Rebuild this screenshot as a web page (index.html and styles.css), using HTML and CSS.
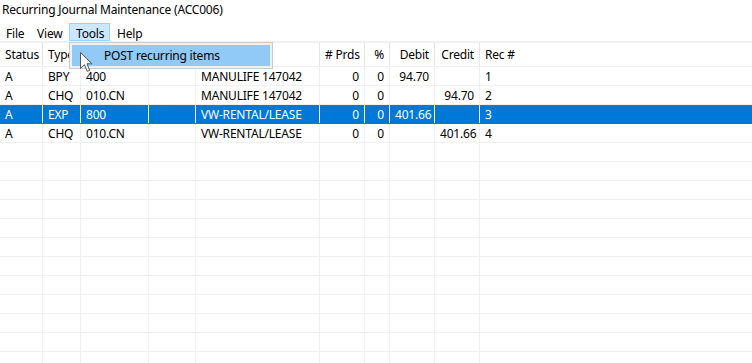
FILE: index.html
```html
<!DOCTYPE html>
<html>
<head>
<meta charset="utf-8">
<link rel="stylesheet" href="styles.css">
</head>
<body>
<div class="window">
  <div class="titlebar">Recurring Journal Maintenance (ACC006)</div>
  <div class="menubar">
    <span class="menu m-file">File</span>
    <span class="menu m-view">View</span>
    <span class="menu m-tools active">Tools</span>
    <span class="menu m-help">Help</span>
  </div>
  <div class="grid">
    <div class="row head">
      <div class="c">Status</div><div class="c">Type</div><div class="c"></div><div class="c"></div><div class="c"></div>
      <div class="c r">#&nbsp;Prds</div><div class="c r">%</div><div class="c r">Debit</div><div class="c r">Credit</div><div class="c last">Rec #</div>
    </div>
    <div class="row">
      <div class="c">A</div><div class="c">BPY</div><div class="c">400</div><div class="c"></div><div class="c">MANULIFE 147042</div>
      <div class="c r">0</div><div class="c r">0</div><div class="c r">94.70</div><div class="c r"></div><div class="c last">1</div>
    </div>
    <div class="row">
      <div class="c">A</div><div class="c">CHQ</div><div class="c">010.CN</div><div class="c"></div><div class="c">MANULIFE 147042</div>
      <div class="c r">0</div><div class="c r">0</div><div class="c r"></div><div class="c r">94.70</div><div class="c last">2</div>
    </div>
    <div class="row sel">
      <div class="c">A</div><div class="c">EXP</div><div class="c">800</div><div class="c"></div><div class="c">VW-RENTAL/LEASE</div>
      <div class="c r">0</div><div class="c r">0</div><div class="c r">401.66</div><div class="c r"></div><div class="c last">3</div>
    </div>
    <div class="row">
      <div class="c">A</div><div class="c">CHQ</div><div class="c">010.CN</div><div class="c"></div><div class="c">VW-RENTAL/LEASE</div>
      <div class="c r">0</div><div class="c r">0</div><div class="c r"></div><div class="c r">401.66</div><div class="c last">4</div>
    </div>
    <div class="row"><div class="c"></div><div class="c"></div><div class="c"></div><div class="c"></div><div class="c"></div><div class="c"></div><div class="c"></div><div class="c"></div><div class="c"></div><div class="c last"></div></div>
    <div class="row"><div class="c"></div><div class="c"></div><div class="c"></div><div class="c"></div><div class="c"></div><div class="c"></div><div class="c"></div><div class="c"></div><div class="c"></div><div class="c last"></div></div>
    <div class="row"><div class="c"></div><div class="c"></div><div class="c"></div><div class="c"></div><div class="c"></div><div class="c"></div><div class="c"></div><div class="c"></div><div class="c"></div><div class="c last"></div></div>
    <div class="row"><div class="c"></div><div class="c"></div><div class="c"></div><div class="c"></div><div class="c"></div><div class="c"></div><div class="c"></div><div class="c"></div><div class="c"></div><div class="c last"></div></div>
    <div class="row"><div class="c"></div><div class="c"></div><div class="c"></div><div class="c"></div><div class="c"></div><div class="c"></div><div class="c"></div><div class="c"></div><div class="c"></div><div class="c last"></div></div>
    <div class="row"><div class="c"></div><div class="c"></div><div class="c"></div><div class="c"></div><div class="c"></div><div class="c"></div><div class="c"></div><div class="c"></div><div class="c"></div><div class="c last"></div></div>
    <div class="row"><div class="c"></div><div class="c"></div><div class="c"></div><div class="c"></div><div class="c"></div><div class="c"></div><div class="c"></div><div class="c"></div><div class="c"></div><div class="c last"></div></div>
    <div class="row"><div class="c"></div><div class="c"></div><div class="c"></div><div class="c"></div><div class="c"></div><div class="c"></div><div class="c"></div><div class="c"></div><div class="c"></div><div class="c last"></div></div>
    <div class="row"><div class="c"></div><div class="c"></div><div class="c"></div><div class="c"></div><div class="c"></div><div class="c"></div><div class="c"></div><div class="c"></div><div class="c"></div><div class="c last"></div></div>
    <div class="row"><div class="c"></div><div class="c"></div><div class="c"></div><div class="c"></div><div class="c"></div><div class="c"></div><div class="c"></div><div class="c"></div><div class="c"></div><div class="c last"></div></div>
    <div class="row"><div class="c"></div><div class="c"></div><div class="c"></div><div class="c"></div><div class="c"></div><div class="c"></div><div class="c"></div><div class="c"></div><div class="c"></div><div class="c last"></div></div>
    <div class="row"><div class="c"></div><div class="c"></div><div class="c"></div><div class="c"></div><div class="c"></div><div class="c"></div><div class="c"></div><div class="c"></div><div class="c"></div><div class="c last"></div></div>
  </div>
  <div class="dropdown">
    <div class="item">POST recurring items</div>
  </div>
  <svg class="cursor" width="13" height="21" viewBox="0 0 13 21">
    <path d="M0.5,0.5 L0.5,16.5 L4.5,12.7 L7.2,19.3 L9.6,18.3 L7,11.8 L12,11.8 Z" fill="#ffffff" stroke="#555555" stroke-width="1" stroke-linejoin="miter"/>
  </svg>
</div>
</body>
</html>
```
FILE: styles.css
```css
* { box-sizing: border-box; }
html, body {
  margin: 0;
  padding: 0;
  background: #ffffff;
}
body {
  font-family: "Noto Sans", "Open Sans", sans-serif;
  font-size: 12px;
  letter-spacing: -0.2px;
  color: #000000;
  width: 752px;
  height: 363px;
  overflow: hidden;
}
.window {
  position: relative;
  width: 752px;
  height: 363px;
  overflow: hidden;
}
.titlebar {
  height: 19px;
  line-height: 19px;
  padding-left: 2px;
}
.menubar {
  height: 24px;
  display: flex;
  align-items: stretch;
  border-bottom: 2px solid #f0f0f0;
  padding-top: 4px;
  padding-bottom: 0;
}
.menu {
  display: flex;
  align-items: center;
  padding-top: 2px;
  border: 1px solid transparent;
}
.m-file { width: 32px; padding-left: 5px; }
.m-view { width: 37px; padding-left: 4px; }
.m-tools { width: 41px; padding-left: 6px; }
.m-help { width: 40px; margin-left: 1px; padding-left: 5px; }
.menu.active {
  background: #cce8ff;
  border-color: #99d1ff;
}
.grid {
  display: flex;
  flex-direction: column;
}
.row {
  display: grid;
  grid-template-columns: 43px 38px 68px 47px 124px 45px 25px 45px 45px 1fr;
  height: 19px;
  border-bottom: 1px solid #f0f0f0;
  flex: none;
}
.row.head {
  height: 24px;
}
.c {
  border-right: 1px solid #f0f0f0;
  padding: 1px 5px 0 5px;
  white-space: nowrap;
  overflow: hidden;
  line-height: 17px;
}
.head .c {
  padding-top: 1px;
  line-height: 22px;
  border-right-color: #e5e5e5;
}
.c.r { text-align: right; }
.c.last { border-right: none; }
.row.sel {
  background: #0078d7;
  color: #ffffff;
  border-bottom-color: #0078d7;
}
.row.sel .c { border-right-color: #ffffff; }
.row.sel .c.last { border-right: none; }
.dropdown {
  position: absolute;
  left: 69px;
  top: 42px;
  width: 204px;
  height: 27px;
  background: #f0f0f0;
  border: 1px solid #cccccc;
  padding: 2px;
}
.item {
  height: 21px;
  line-height: 21px;
  background: #91c9f7;
  padding-left: 32px;
}
.cursor {
  position: absolute;
  left: 80px;
  top: 52px;
}
```
